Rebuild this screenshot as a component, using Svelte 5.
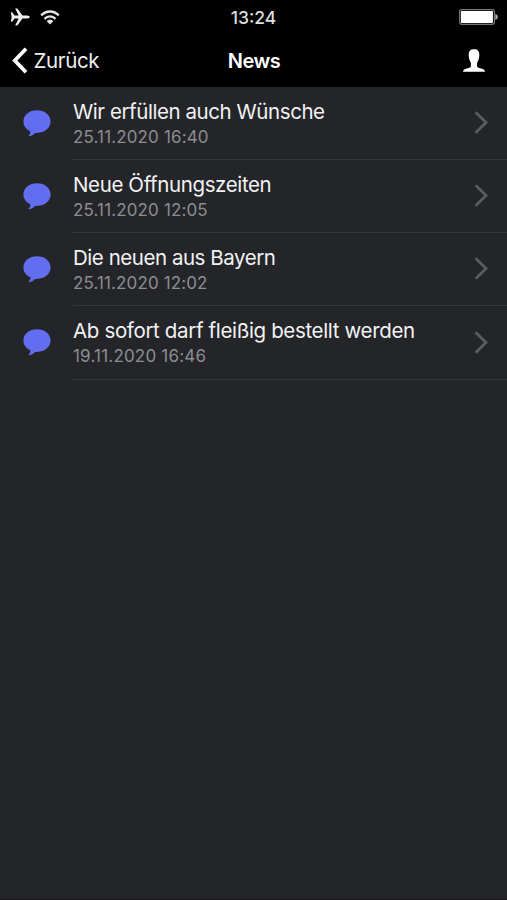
<script>
  const items = [
    { title: 'Wir erfüllen auch Wünsche', date: '25.11.2020 16:40', ts: -0.43, ds: 0.14 },
    { title: 'Neue Öffnungszeiten', date: '25.11.2020 12:05', ts: -0.38, ds: 0.14 },
    { title: 'Die neuen aus Bayern', date: '25.11.2020 12:02', ts: -0.46, ds: 0.12 },
    { title: 'Ab sofort darf fleißig bestellt werden', date: '19.11.2020 16:46', ts: -0.35, ds: 0.2 }
  ];
</script>

<div class="screen">
  <header>
    <div class="status">
      <div class="side">
        <svg class="plane" width="20" height="18" viewBox="0 0 20 18">
          <path d="M0.8 4.2H2.2L4.6 7.4L8.6 7.5L5.2 0.5H7.4L12.4 7.5H17.2C18.8 7.6 19.7 8.3 19.7 9C19.7 9.7 18.8 10.4 17.2 10.5H12.4L7.4 17.5H5.2L8.6 10.5L4.6 10.6L2.2 13.8H0.8L1.7 9Z" fill="#efefef" />
        </svg>
        <svg class="wifi" width="20" height="15" viewBox="0 0 20 15" fill="none" stroke="#e6e6e6" stroke-width="2.4">
          <path d="M1.2 5.4C6.2 0.1 13.8 0.1 18.8 5.4" />
          <path d="M4.5 8.8C7.7 5.6 12.3 5.6 15.5 8.8" />
          <path d="M10 14.5L6.7 11.2C8.5 9.4 11.5 9.4 13.3 11.2Z" fill="#e6e6e6" stroke="none" />
        </svg>
      </div>
      <span class="time">13:24</span>
      <div class="side right">
        <svg width="40" height="16" viewBox="0 0 40 16">
          <rect x="0.6" y="0.6" width="34.8" height="14.8" rx="2.4" fill="#000" stroke="#777" stroke-width="1.2" />
          <rect x="1.9" y="1.9" width="32" height="12.2" rx="0.8" fill="#fff" />
          <path d="M36.3 5C38 5.4 38.8 6.6 38.8 8S38 10.6 36.3 11Z" fill="#aaa" />
        </svg>
      </div>
    </div>
    <nav>
      <div class="side back">
        <svg width="16" height="27" viewBox="0 0 16 27" fill="none" stroke="#fff" stroke-width="3.8">
          <path d="M14 1.8L2.8 13.5L14 25.2" />
        </svg>
        <span>Zurück</span>
      </div>
      <span class="heading">News</span>
      <div class="side right">
        <svg class="user" width="22" height="23" viewBox="0 0 22 23" fill="#fff">
          <path d="M11 0.2C14.8 0.2 16.4 2.2 16.3 6C16.2 9.5 15.3 12 14.1 13.8V17.2C14.4 18.6 16.4 19 19 19.7C21 20.3 21.9 21.1 22 22.8H0C0.1 21.1 1 20.3 3 19.7C5.6 19 7.6 18.6 7.9 17.2V13.8C6.7 12 5.8 9.5 5.7 6C5.6 2.2 7.2 0.2 11 0.2Z" />
        </svg>
      </div>
    </nav>
  </header>
  <main>
    {#each items as item}
      <div class="row">
        <svg class="bubble" width="28" height="27" viewBox="0 0 28 27">
          <path d="M14 0.3C21.6 0.3 27.6 5.1 27.6 11.6S21.6 22.9 14 22.9H12C10.6 24.8 8.4 26.1 5.2 26.3C6.7 24.9 7.4 23.2 7.4 21.3C3 19.4 0.4 15.8 0.4 11.6C0.4 5.1 6.4 0.3 14 0.3Z" fill="#626df0" />
        </svg>
        <div class="body">
          <div class="text">
            <span class="title" style="letter-spacing: {item.ts}px">{item.title}</span>
            <span class="date" style="letter-spacing: {item.ds}px">{item.date}</span>
          </div>
          <svg class="chevron" width="15" height="23" viewBox="0 0 15 23" fill="none" stroke="#5b5c60" stroke-width="2.8">
            <path d="M1.6 1.2L12 11.5L1.6 21.8" />
          </svg>
        </div>
      </div>
    {/each}
  </main>
</div>

<style>
  .screen {
    box-sizing: border-box;
    width: 507px;
    height: 900px;
    overflow: hidden;
    background: #242529;
    border-bottom: 1px solid #201820;
    font-family: Inter, "Liberation Sans", sans-serif;
    color: #f2f2f4;
  }
  header {
    height: 86.6px;
    background: #000;
    border-bottom: 0.4px solid #000;
    box-sizing: border-box;
  }
  .status {
    display: flex;
    align-items: center;
    height: 34px;
    padding: 0 8px 0 10px;
  }
  .side {
    flex: 1;
    display: flex;
    align-items: center;
  }
  .right { justify-content: flex-end; }
  .wifi { margin-left: 10px; }
  .time {
    margin-right: 2px;
    font-size: 17.5px;
    font-weight: 500;
    color: #dedede;
  }
  nav {
    display: flex;
    align-items: center;
    height: 53px;
    padding: 0 12px;
  }
  .back span {
    margin-left: 5.5px;
    font-size: 20.5px;
    letter-spacing: -0.35px;
    color: #eee;
  }
  .heading {
    margin-left: 1px;
    font-size: 20px;
    font-weight: 600;
    letter-spacing: -0.5px;
    color: #fff;
  }
  .user { margin-right: 10px; }
  .row {
    display: flex;
    height: 73.25px;
  }
  .bubble {
    flex: none;
    margin: 23px 22px 0 23px;
  }
  .body {
    flex: 1;
    display: flex;
    justify-content: space-between;
    box-sizing: border-box;
    border-bottom: 1px solid #36373b;
  }
  .text {
    display: flex;
    flex-direction: column;
    padding-top: 12px;
    white-space: nowrap;
  }
  .title {
    font-size: 20.5px;
    line-height: 25px;
  }
  .date {
    font-size: 17px;
    line-height: 26px;
    color: #8c8d91;
  }
  .chevron {
    flex: none;
    margin: 24.4px 18.5px 0 0;
  }
</style>
